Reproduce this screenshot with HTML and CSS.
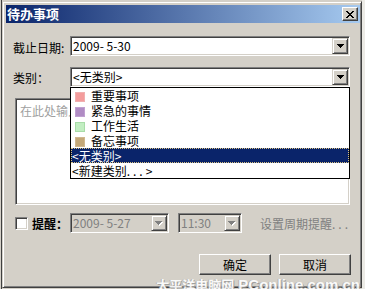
FILE: index.html
```html
<!DOCTYPE html>
<html>
<head>
<meta charset="utf-8">
<link rel="stylesheet" href="styles.css">
</head>
<body>
<div class="dialog">
  <div class="titlebar">
    <span class="title">待办事项</span>
    <span class="close">
      <svg width="8" height="7" viewBox="0 0 8 7" shape-rendering="crispEdges"><path d="M0 0h2v1H0zM6 0h2v1H6zM1 1h2v1H1zM5 1h2v1H5zM2 2h4v1H2zM3 3h2v1H3zM2 4h4v1H2zM1 5h2v1H1zM5 5h2v1H5zM0 6h2v1H0zM6 6h2v1H6z" fill="#000"/></svg>
    </span>
  </div>
  <div class="content">
    <div class="row row-date">
      <span class="lbl lbl-date">截止日期:</span>
      <div class="combo">
        <span class="combo-text">2009- 5-30</span>
        <span class="dd"><svg width="7" height="4" viewBox="0 0 7 4" shape-rendering="crispEdges"><path d="M0 0h7v1H0zM1 1h5v1H1zM2 2h3v1H2zM3 3h1v1H3z" fill="#000"/></svg></span>
      </div>
    </div>
    <div class="row row-cat">
      <span class="lbl">类别：</span>
      <div class="combo-wrap">
        <div class="combo">
          <span class="combo-text">&lt;无类别&gt;</span>
          <span class="dd"><svg width="7" height="4" viewBox="0 0 7 4" shape-rendering="crispEdges"><path d="M0 0h7v1H0zM1 1h5v1H1zM2 2h3v1H2zM3 3h1v1H3z" fill="#000"/></svg></span>
        </div>
        <ul class="list">
          <li class="item"><span class="sw sw-pink"></span>重要事项</li>
          <li class="item"><span class="sw sw-purple"></span>紧急的事情</li>
          <li class="item"><span class="sw sw-green"></span>工作生活</li>
          <li class="item"><span class="sw sw-tan"></span>备忘事项</li>
          <li class="item item-sel">&lt;无类别&gt;</li>
          <li class="item item-plain">&lt;新建类别<span class="dots">...</span>&gt;</li>
        </ul>
      </div>
    </div>
    <div class="memo"><span class="placeholder">在此处输入内容...</span></div>
    <div class="remind">
      <span class="check"></span>
      <span class="remind-lbl">提醒：</span>
      <div class="combo combo-dis combo-rdate">
        <span class="combo-text">2009- 5-27</span>
        <span class="dd"><svg width="8" height="5" viewBox="0 0 8 5" shape-rendering="crispEdges"><path d="M1 1h7v1H1zM2 2h5v1H2zM3 3h3v1H3zM4 4h1v1H4z" fill="#fff"/><path d="M0 0h7v1H0zM1 1h5v1H1zM2 2h3v1H2zM3 3h1v1H3z" fill="#808080"/></svg></span>
      </div>
      <div class="combo combo-dis combo-time">
        <span class="combo-text">11:30</span>
        <span class="dd"><svg width="8" height="5" viewBox="0 0 8 5" shape-rendering="crispEdges"><path d="M1 1h7v1H1zM2 2h5v1H2zM3 3h3v1H3zM4 4h1v1H4z" fill="#fff"/><path d="M0 0h7v1H0zM1 1h5v1H1zM2 2h3v1H2zM3 3h1v1H3z" fill="#808080"/></svg></span>
      </div>
      <span class="period">设置周期提醒<span class="dots">...</span></span>
    </div>
    <div class="actions">
      <span class="btn">确定</span>
      <span class="btn">取消</span>
    </div>
  </div>
</div>
<div class="watermark"><span class="wm-cn">太平洋电脑网</span> PConline.com.cn</div>
</body>
</html>
```
FILE: styles.css
```css
* {
  box-sizing: border-box;
  margin: 0;
  padding: 0;
}

body {
  width: 365px;
  height: 289px;
  overflow: hidden;
  position: relative;
  background: linear-gradient(to right, #d4d0c8 0 1px, #404040 1px 2px, #d4d0c8 2px 362px, #ecebe6 362px);
  font-family: "Noto Sans CJK SC", sans-serif;
  font-size: 12px;
  color: #000;
}

.dialog {
  margin: 1px 0 0 2px;
  width: 360px;
  height: 287px;
  background: #d4d0c8;
  border: 1px solid;
  border-color: #d4d0c8 #404040 #404040 #d4d0c8;
  box-shadow: inset 1px 1px #fff, inset -1px -1px #808080;
  padding: 3px 1px 0 3px;
  overflow: hidden;
}

.titlebar {
  height: 18px;
  display: flex;
  align-items: center;
  justify-content: space-between;
  background: linear-gradient(to right, #0a246a, #a6caf0);
  padding: 0 2px 0 1px;
}

.title {
  color: #fff;
  font-weight: bold;
  font-size: 13px;
  line-height: 18px;
}

.close {
  width: 16px;
  height: 14px;
  display: flex;
  align-items: center;
  justify-content: center;
  background: #d4d0c8;
  border: 1px solid;
  border-color: #fff #404040 #404040 #fff;
  box-shadow: inset -1px -1px #808080;
}

.row {
  display: grid;
  grid-template-columns: 57px 280px;
  align-items: center;
  padding-left: 7px;
  height: 20px;
}

.row-date {
  margin-top: 13px;
}

.row-cat {
  margin-top: 11px;
}

.lbl {
  line-height: 15px;
  white-space: nowrap;
}

.lbl-date {
  padding-top: 3px;
}

.combo-wrap {
  position: relative;
  height: 20px;
}

.combo {
  height: 20px;
  display: flex;
  align-items: center;
  background: #fff;
  border: 1px solid;
  border-color: #808080 #fff #fff #808080;
  box-shadow: inset 1px 1px #404040, inset -1px -1px #d4d0c8;
  padding: 1px;
}

.combo-text {
  flex: 1;
  white-space: pre;
  line-height: 16px;
  padding-left: 1px;
}

.dd {
  width: 16px;
  height: 16px;
  flex: none;
  display: flex;
  align-items: center;
  justify-content: center;
  background: #d4d0c8;
  border: 1px solid;
  border-color: #d4d0c8 #404040 #404040 #d4d0c8;
  box-shadow: inset 1px 1px #fff, inset -1px -1px #808080;
}

.list {
  position: absolute;
  top: 100%;
  left: 0;
  width: 280px;
  height: 92px;
  background: #fff;
  border: 1px solid #000;
  list-style: none;
  z-index: 2;
}

.item {
  height: 15px;
  line-height: 15px;
  display: flex;
  align-items: center;
  padding-left: 4px;
  white-space: nowrap;
}

.sw {
  width: 10px;
  height: 10px;
  margin-right: 6px;
  margin-top: 2px;
  border: 1px solid;
}

.sw-pink { background: #f49c9c; border-color: #f0b0b0; }
.sw-purple { background: #b08cc4; border-color: #c0a0d0; }
.sw-green { background: #c2eec2; border-color: #a8dca8; }
.sw-tan { background: #c4a878; border-color: #d0b890; }

.item-sel {
  background: #0a246a;
  color: #fff;
  border: 1px dotted #d8c080;
  padding-left: 0;
}

.item-plain {
  padding-left: 1px;
}

.dots {
  letter-spacing: 3px;
}

.memo {
  margin: 11px 0 0 9px;
  width: 335px;
  height: 107px;
  background: #fff;
  border: 1px solid;
  border-color: #808080 #fff #fff #808080;
  box-shadow: inset 1px 1px #404040, inset -1px -1px #d4d0c8;
  padding: 3px 4px;
}

.placeholder {
  color: #a0a0a0;
  line-height: 15px;
}

.remind {
  display: flex;
  align-items: center;
  margin-top: 8px;
  height: 20px;
  padding-left: 9px;
}

.check {
  width: 13px;
  height: 13px;
  background: #fff;
  border: 1px solid;
  border-color: #808080 #fff #fff #808080;
  box-shadow: inset 1px 1px #404040, inset -1px -1px #d4d0c8;
}

.remind-lbl {
  width: 42px;
  padding-left: 4px;
  font-weight: bold;
  line-height: 15px;
  white-space: nowrap;
}

.combo-dis {
  background: #d4d0c8;
  color: #808080;
}

.combo-rdate {
  width: 99px;
  margin-right: 9px;
}

.combo-time {
  width: 64px;
}

.period {
  margin-left: 18px;
  color: #808080;
  white-space: nowrap;
}

.actions {
  display: flex;
  justify-content: flex-end;
  gap: 8px;
  margin-top: 21px;
  padding-right: 9px;
}

.btn {
  width: 72px;
  height: 21px;
  display: flex;
  align-items: center;
  justify-content: center;
  background: #d4d0c8;
  border: 1px solid;
  border-color: #fff #404040 #404040 #fff;
  box-shadow: inset -1px -1px #808080;
  line-height: 15px;
}

.watermark {
  position: absolute;
  right: 5px;
  top: 276px;
  color: #fff;
  font-family: "Liberation Sans", "Noto Sans CJK SC", sans-serif;
  font-weight: bold;
  font-size: 15px;
  line-height: 18px;
  white-space: nowrap;
  text-shadow: 1px 1px 0 #9a9a9a, -1px 0 0 #b0b0b0;
  opacity: 0.9;
}

.wm-cn {
  font-family: "Noto Sans CJK SC", sans-serif;
  font-size: 13px;
}
```
